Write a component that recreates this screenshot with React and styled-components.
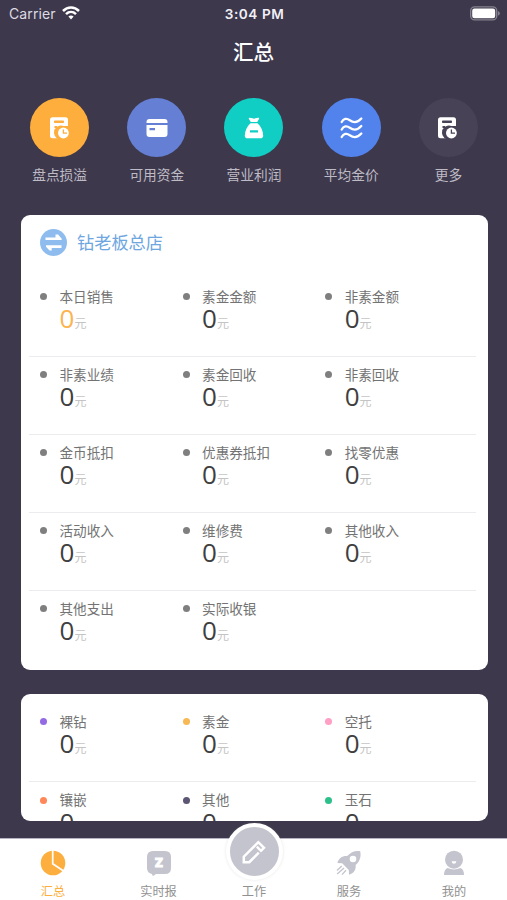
import React from 'react';
import styled, { createGlobalStyle } from 'styled-components';

const GlobalStyle = createGlobalStyle`
  * {
    box-sizing: border-box;
  }

  body {
    margin: 0;
    background: #3d384b;
    font-family: 'Inter', 'Noto Sans CJK SC', sans-serif;
    overflow: hidden;
  }
`;

const Screen = styled.div`
  width: 507px;
  height: 900px;
  display: flex;
  flex-direction: column;
  overflow: hidden;
  background: #3d384b;
`;

const StatusBar = styled.div`
  height: 28px;
  padding: 0 7px 0 9px;
  display: grid;
  grid-template-columns: 1fr auto 1fr;
  align-items: center;
  color: #f1eff5;
  line-height: 28px;
`;

const Carrier = styled.div`
  display: flex;
  align-items: center;
  gap: 6px;
  font-size: 14px;
  letter-spacing: 0.1px;
  color: #dddbe3;

  svg {
    margin-top: -2px;
  }
`;

const Time = styled.div`
  font-size: 13.6px;
  font-weight: 600;
  letter-spacing: 0.55px;
`;

const Battery = styled.svg`
  justify-self: end;
  margin-top: -2px;
`;

const Title = styled.h1`
  margin: 0;
  height: 48px;
  line-height: 50px;
  text-align: center;
  font-size: 20.5px;
  font-weight: 500;
  color: #fff;
`;

const Shortcuts = styled.div`
  height: 139px;
  padding: 22px 10px 0 11px;
  display: grid;
  grid-template-columns: repeat(5, 1fr);
`;

const Shortcut = styled.div`
  display: flex;
  flex-direction: column;
  align-items: center;
`;

const Bubble = styled.div`
  width: 59px;
  height: 59px;
  border-radius: 50%;
  display: flex;
  align-items: center;
  justify-content: center;
  background: ${({ color }) => color};
`;

const ShortcutLabel = styled.span`
  margin-top: 8px;
  font-size: 13.7px;
  line-height: 20px;
  color: #bebbc6;
`;

const Scroller = styled.div`
  height: 606px;
  flex: none;
  padding: 0 19.5px 0 20.5px;
  display: flex;
  flex-direction: column;
  gap: 24px;
`;

const Card = styled.section`
  flex: ${({ clipped }) => (clipped ? '1 1 0' : 'none')};
  min-height: 0;
  overflow: hidden;
  padding: ${({ clipped }) => (clipped ? '10px 12px 0 8px' : '0 12px 1px 8px')};
  border-radius: 9px;
  background: #fff;
`;

const StoreHeader = styled.div`
  height: 63.5px;
  padding: 14px 0 0 11.5px;
  display: flex;
  align-items: flex-start;
  gap: 10px;
`;

const StoreName = styled.span`
  font-size: 17.2px;
  line-height: 28px;
  color: #6ea6e0;
`;

const Row = styled.div`
  height: 78.1px;
  padding: 8px 0 0 11.5px;
  display: grid;
  grid-template-columns: repeat(3, 142.6px);
  align-content: start;
  border-bottom: 1px solid #ececee;

  &:last-child {
    border-bottom: none;
  }
`;

const Stat = styled.div`
  display: grid;
  grid-template-columns: 19.5px 1fr;
  grid-template-rows: 20px 29px;
  align-items: center;
`;

const Dot = styled.i`
  width: 7px;
  height: 7px;
  border-radius: 50%;
  background: ${({ color }) => color || '#7f7f7f'};
`;

const StatLabel = styled.span`
  font-size: 13.6px;
  line-height: 20px;
  color: #737373;
`;

const Amount = styled.div`
  grid-column: 2;
  font-family: 'Open Sans', 'Noto Sans CJK SC', sans-serif;
  font-size: 26px;
  line-height: 30px;
  font-weight: 400;
  color: ${({ highlight }) => (highlight ? '#fbb450' : '#3f3f3f')};
`;

const Unit = styled.small`
  font-size: 12px;
  color: #c4c4c4;
`;

const TabBar = styled.nav`
  margin-top: 17px;
  height: 62px;
  flex: none;
  display: grid;
  grid-template-columns: 106px 105px 86px 104px 106px;
  grid-template-rows: 61px;
  border-top: 1px solid #b6b4c2;
  background: #fff;
`;

const Tab = styled.div`
  display: flex;
  flex-direction: column;
  align-items: center;
  justify-content: flex-end;
  font-size: 12.2px;
  line-height: 17px;
  color: ${({ active }) => (active ? '#fcaf3e' : '#919191')};

  svg {
    flex: none;
    margin-bottom: 7px;
  }
`;

const Compose = styled.div`
  width: 57px;
  height: 57px;
  flex: none;
  margin-bottom: 3px;
  display: flex;
  align-items: center;
  justify-content: center;
  border: 4px solid #fff;
  border-radius: 50%;
  background: #c3c4cd;
  box-shadow: 0 0 3px rgba(150, 150, 165, 0.25);

  svg {
    margin: 0;
  }
`;

const WifiIcon = () => (
  <svg width="18" height="14" viewBox="0 0 18 14" fill="none" stroke="#fff" strokeWidth="2.5">
    <path d="M1 5C5.6 .4 12.4 .4 17 5" />
    <path d="M4 8.1c3-2.8 7-2.8 10 0" />
    <path d="M6.4 10.5c1.6-1.4 3.6-1.4 5.2 0L9 13.4z" fill="#fff" stroke="none" />
  </svg>
);

const BatteryIcon = () => (
  <Battery width="30" height="15" viewBox="0 0 30 15">
    <rect x=".7" y=".9" width="26" height="13" rx="4" fill="none" stroke="#85818f" strokeWidth="1.4" />
    <rect x="2.2" y="2.5" width="23" height="9.8" rx="2.2" fill="#fff" />
    <path d="M28 5.2c2.4.6 2.4 3.8 0 4.4z" fill="#85818f" />
  </Battery>
);

const ReportIcon = ({ bg }) => (
  <svg width="22" height="24" viewBox="0 0 22 24">
    <rect x="1" y="1.2" width="18" height="21" rx="2.5" fill="#fff" />
    <rect x="5" y="4.6" width="10" height="2.4" rx=".8" fill={bg} />
    <path d="M5.500 11h2.600M5.500 14.500h1" stroke={bg} strokeWidth="1.8" />
    <path d="M14.400 10a6.600 6.600 0 0 0-4.800 13.200H21V10z" fill={bg} />
    <circle cx="14.400" cy="17" r="5.400" fill="#fff" />
    <path d="M14.400 13.400v3.700h3.600" stroke={bg} strokeWidth="1.300" fill="none" />
  </svg>
);

const CardIcon = () => (
  <svg width="22" height="20" viewBox="0 0 22 20" fill="#fff">
    <path d="M.5 5V4Q.5 1 3.500 1h15q3 0 3 3v1z" />
    <path fillRule="evenodd" d="M.5 7h21v9q0 3-3 3h-15q-3 0-3-3zM3.500 10v2.200h5.500V10z" />
  </svg>
);

const BagIcon = () => (
  <svg width="20" height="22" viewBox="0 0 20 22" fill="#fff">
    <path d="M5.300.7Q7.500.8 8.500 1.300q1.500.8 3 0 1.500-.8 3.200-.6.7.4.3 1.200L13.200 5H6.800L4.900 1.900Q4.500 1 5.300.7z" />
    <path
      fillRule="evenodd"
      d="M6.500 6.300h7c3.500 3 5.500 7.700 5.700 12.100 0 1.900-.9 2.800-2.500 2.800H3.300c-1.600 0-2.500-.9-2.500-2.800C1 14 3 9.300 6.500 6.300zM6 13.300v2.100h8v-2.100z"
    />
  </svg>
);

const WavesIcon = () => (
  <svg width="23" height="22" viewBox="0 0 23 22" fill="none" stroke="#fff" strokeWidth="2.300" strokeLinecap="round">
    <path d="M1.700 5C3.600 1.600 6.600.9 9.800 3.200c3.900 2.900 7.800 2.500 11.500-1.700" />
    <path d="M1.700 12.500C3.600 9.100 6.600 8.400 9.800 10.700c3.900 2.900 7.800 2.500 11.500-1.700" />
    <path d="M1.700 20C3.600 16.600 6.600 15.900 9.800 18.200c3.900 2.900 7.800 2.500 11.500-1.700" />
  </svg>
);

const SwapIcon = () => (
  <svg width="27" height="27" viewBox="0 0 27 27">
    <circle cx="13.500" cy="13.500" r="13.500" fill="#8ebcef" />
    <path d="M5.500 8.400h10V5.600h2.600l3.600 4.100v1.400H5.500zM21.500 19h-9.800v2.500H9.500L6 17.700v-1.400h15.500z" fill="#fff" />
  </svg>
);

const PieIcon = () => (
  <svg width="26" height="26" viewBox="0 0 26 26">
    <circle cx="13" cy="13" r="12.300" fill="#fcaf3e" />
    <path d="M12.700 0v13.800l10.500 7" fill="none" stroke="#fff" strokeWidth="1.700" />
  </svg>
);

const NewsIcon = () => (
  <svg width="26" height="26" viewBox="0 0 26 26">
    <path d="M7 1h12q6 0 6 6v11q0 6-6 6h-9l-2.500 1.800q-1 .3-1.200-.8L6 23.900Q1 23.300 1 18V7q0-6 6-6z" fill="#c3c4cd" />
    <text
      x="13"
      y="16.600"
      textAnchor="middle"
      fill="#fff"
      stroke="#fff"
      strokeWidth=".9"
      fontFamily="Inter, sans-serif"
      fontSize="12"
      fontWeight="900"
    >
      Z
    </text>
  </svg>
);

const PencilIcon = () => (
  <svg width="26" height="26" viewBox="0 0 26 26" fill="none" stroke="#fff" strokeWidth="2.500">
    <path d="M17.800 13.600 8.300 23.200H2.800v-5.500L17.300 3.200l5.700 5.600-3 3-4.200-4.200" />
  </svg>
);

const RocketIcon = () => (
  <svg width="26" height="26" viewBox="0 0 26 26">
    <path
      fillRule="evenodd"
      d="M24.200 1.200C19 .4 14.700 2.200 11.200 6.100 6.300 5.700 2.800 8.200 1.400 13l4.800.2 6.600 6.700.2 4.900c5-1.700 7.200-5 6.600-9.800 4.200-3.600 5.800-8.300 4.600-13.800zM17 5.700a3.300 3.300 0 1 1 0 6.600 3.300 3.300 0 0 1 0-6.600z"
      fill="#c3c4cd"
    />
    <path d="M5.800 16.100 1 20.500M8 18l-6.800 6M10 20.200l-4 4.400" stroke="#c3c4cd" strokeWidth="1.300" />
  </svg>
);

const UserIcon = () => (
  <svg width="24" height="26" viewBox="0 0 24 26">
    <circle cx="12" cy="9.700" r="9" fill="#c3c4cd" />
    <path d="M5.500 18q6.500 2.800 13 0 3.500 1.700 3.500 7H2q0-5.300 3.500-7z" fill="#c3c4cd" />
    <path d="M9.600 11.200h4.800q-.4 2.600-2.400 2.600t-2.400-2.600z" fill="#fff" />
  </svg>
);

const shortcuts = [
  { label: '盘点损溢', color: '#fdae3c', icon: <ReportIcon bg="#fdae3c" /> },
  { label: '可用资金', color: '#647fd4', icon: <CardIcon /> },
  { label: '营业利润', color: '#11cec4', icon: <BagIcon /> },
  { label: '平均金价', color: '#5283ec', icon: <WavesIcon /> },
  { label: '更多', color: '#474256', icon: <ReportIcon bg="#474256" /> },
];

const storeRows = [
  [{ label: '本日销售', highlight: true }, { label: '素金金额' }, { label: '非素金额' }],
  [{ label: '非素业绩' }, { label: '素金回收' }, { label: '非素回收' }],
  [{ label: '金币抵扣' }, { label: '优惠券抵扣' }, { label: '找零优惠' }],
  [{ label: '活动收入' }, { label: '维修费' }, { label: '其他收入' }],
  [{ label: '其他支出' }, { label: '实际收银' }],
];

const categoryRows = [
  [
    { label: '裸钻', color: '#946be4' },
    { label: '素金', color: '#f7b955' },
    { label: '空托', color: '#ff9fc4' },
  ],
  [
    { label: '镶嵌', color: '#ff8759' },
    { label: '其他', color: '#5c5573' },
    { label: '玉石', color: '#2dc08a' },
  ],
];

const StatRows = ({ rows }) =>
  rows.map((row, i) => (
    <Row key={i}>
      {row.map(({ label, color, highlight }) => (
        <Stat key={label}>
          <Dot color={color} />
          <StatLabel>{label}</StatLabel>
          <Amount highlight={highlight ? 1 : 0}>
            0<Unit>元</Unit>
          </Amount>
        </Stat>
      ))}
    </Row>
  ));

const App = () => {
  return (
    <>
      <GlobalStyle />
      <Screen>
        <StatusBar>
          <Carrier>
            Carrier
            <WifiIcon />
          </Carrier>
          <Time>3:04 PM</Time>
          <BatteryIcon />
        </StatusBar>
        <Title>汇总</Title>
        <Shortcuts>
          {shortcuts.map(({ label, color, icon }) => (
            <Shortcut key={label}>
              <Bubble color={color}>{icon}</Bubble>
              <ShortcutLabel>{label}</ShortcutLabel>
            </Shortcut>
          ))}
        </Shortcuts>
        <Scroller>
          <Card>
            <StoreHeader>
              <SwapIcon />
              <StoreName>钻老板总店</StoreName>
            </StoreHeader>
            <StatRows rows={storeRows} />
          </Card>
          <Card clipped={1}>
            <StatRows rows={categoryRows} />
          </Card>
        </Scroller>
        <TabBar>
          <Tab active={1}>
            <PieIcon />
            汇总
          </Tab>
          <Tab>
            <NewsIcon />
            实时报
          </Tab>
          <Tab>
            <Compose>
              <PencilIcon />
            </Compose>
            工作
          </Tab>
          <Tab>
            <RocketIcon />
            服务
          </Tab>
          <Tab>
            <UserIcon />
            我的
          </Tab>
        </TabBar>
      </Screen>
    </>
  );
};

export default App;
